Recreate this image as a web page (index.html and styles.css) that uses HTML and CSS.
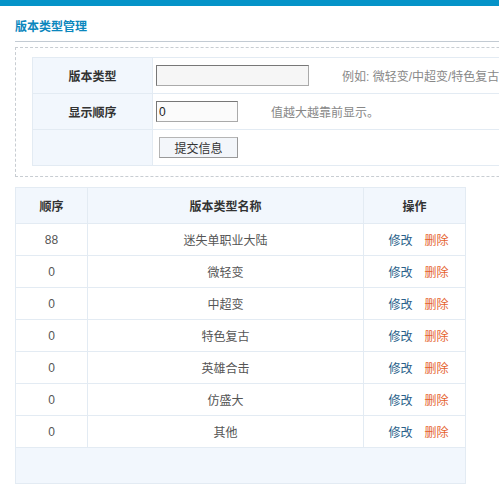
FILE: index.html
```html
<!DOCTYPE html>
<html lang="zh-CN">
<head>
<meta charset="utf-8">
<title>版本类型管理</title>
<link rel="stylesheet" href="styles.css">
</head>
<body>
<div class="topbar"></div>
<div class="main">
  <h2 class="title">版本类型管理</h2>
  <div class="formbox">
    <table class="form">
      <tr>
        <th>版本类型</th>
        <td><input class="ipt ipt-long" type="text" value=""><span class="hint hint1">例如: 微轻变/中超变/特色复古</span></td>
      </tr>
      <tr>
        <th>显示顺序</th>
        <td><input class="ipt ipt-short" type="text" value="0"><span class="hint hint2">值越大越靠前显示。</span></td>
      </tr>
      <tr>
        <th></th>
        <td><button class="btn" type="button">提交信息</button></td>
      </tr>
    </table>
  </div>
  <table class="list">
    <thead>
      <tr><th class="c1">顺序</th><th class="c2">版本类型名称</th><th class="c3">操作</th></tr>
    </thead>
    <tbody>
      <tr><td>88</td><td>迷失单职业大陆</td><td class="ops"><a class="edit">修改</a><a class="del">删除</a></td></tr>
      <tr><td>0</td><td>微轻变</td><td class="ops"><a class="edit">修改</a><a class="del">删除</a></td></tr>
      <tr><td>0</td><td>中超变</td><td class="ops"><a class="edit">修改</a><a class="del">删除</a></td></tr>
      <tr><td>0</td><td>特色复古</td><td class="ops"><a class="edit">修改</a><a class="del">删除</a></td></tr>
      <tr><td>0</td><td>英雄合击</td><td class="ops"><a class="edit">修改</a><a class="del">删除</a></td></tr>
      <tr><td>0</td><td>仿盛大</td><td class="ops"><a class="edit">修改</a><a class="del">删除</a></td></tr>
      <tr><td>0</td><td>其他</td><td class="ops"><a class="edit">修改</a><a class="del">删除</a></td></tr>
    </tbody>
    <tfoot>
      <tr><td colspan="3"></td></tr>
    </tfoot>
  </table>
</div>
</body>
</html>
```

FILE: styles.css
```css
html, body {
  margin: 0;
  padding: 0;
  background: #fff;
  overflow: hidden;
}
body {
  font-family: "Liberation Sans", "Noto Sans CJK SC", sans-serif;
  font-size: 12px;
  color: #555;
}
.topbar {
  height: 6px;
  background: #0593c8;
}
.main {
  width: 640px;
  padding-left: 15px;
}
.title {
  margin: 0;
  height: 36px;
  line-height: 14px;
  padding-top: 14px;
  box-sizing: border-box;
  font-size: 12px;
  font-weight: bold;
  color: #0b87bd;
  border-bottom: 1px solid #c3cbd3;
}
.formbox {
  margin-top: 5px;
  border: 1px dashed #c8cdd2;
  padding: 9px 16px 10px 16px;
}
.form {
  border-collapse: collapse;
  width: 100%;
}
.form th, .form td {
  border: 1px solid #e3ebf3;
  height: 35px;
  padding: 0;
}
.form th {
  width: 119px;
  background: #f2f7fd;
  color: #333;
  font-weight: bold;
  text-align: center;
}
.form td {
  padding-left: 3px;
  text-align: left;
}
.ipt {
  box-sizing: border-box;
  height: 21px;
  border: 1px solid #aaa;
  border-top-color: #777;
  border-left-color: #777;
  font-family: "Liberation Sans", "Noto Sans CJK SC", sans-serif;
  font-size: 12px;
  padding: 0 2px;
  vertical-align: middle;
  color: #222;
}
.ipt-long {
  width: 153px;
  background: #f6f6f6;
}
.ipt-short {
  width: 82px;
  background: #fbfbfb;
}
.hint {
  color: #888;
  vertical-align: middle;
}
.hint1 { margin-left: 33px; }
.hint2 { margin-left: 33px; }
.btn {
  margin-left: 3px;
  width: 79px;
  height: 21px;
  border: 1px solid #b5b5b5;
  border-right-color: #999;
  border-bottom-color: #999;
  background: #f3f6fa;
  font-family: "Liberation Sans", "Noto Sans CJK SC", sans-serif;
  font-size: 12px;
  color: #333;
  padding: 0;
}
.list {
  margin-top: 10px;
  width: 450px;
  border-collapse: collapse;
  table-layout: fixed;
}
.list th, .list td {
  border: 1px solid #e3ebf3;
  text-align: center;
  padding: 0;
}
.list thead th {
  height: 35px;
  background: #f2f7fd;
  color: #333;
  font-weight: bold;
}
.list .c1 { width: 71px; }
.list .c2 { width: 275px; }
.list .c3 { width: 101px; }
.list tbody td {
  height: 31px;
  color: #555;
}
.list tbody td.ops {
  padding-left: 8px;
}
.list tfoot td {
  height: 35px;
  background: #f2f7fd;
}
.edit {
  color: #2a5f8a;
  margin-right: 12px;
}
.del {
  color: #e5622e;
}
```
